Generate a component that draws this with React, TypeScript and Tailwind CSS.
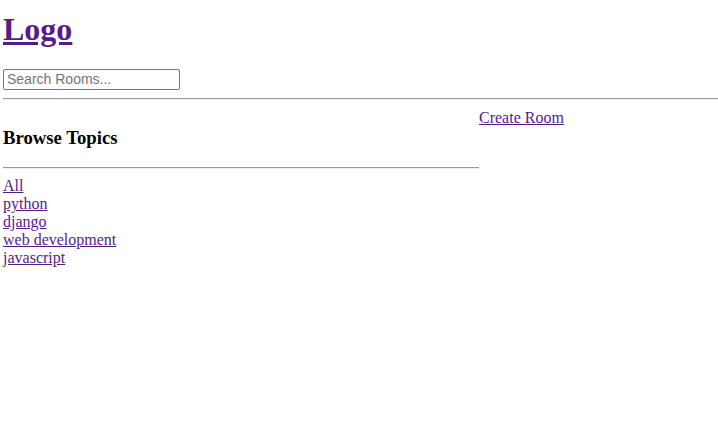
import React from "react";

const topics = ["All", "python", "django", "web development", "javascript"];

function Rule() {
  return <div className="h-[2px] border-t border-b border-t-[#9a9a9a] border-b-[#eeeeee]" />;
}

export default function App() {
  return (
    <div className="min-h-[448px] bg-white pl-[3px] text-black" style={{ fontFamily: '"Liberation Serif", "Times New Roman", serif' }}>
      {/* Header */}
      <h1 className="pt-[11px] text-[32px] font-bold leading-[37px]">
        <a href="#" className="text-[#551a8b] underline">Logo</a>
      </h1>
      <form className="mt-[19px]">
        <input
          type="text"
          placeholder="Search Rooms..."
          className="box-border h-[21px] w-[177px] rounded-[2px] border border-[#767676] px-[3px] text-[14px] leading-[15px] text-black placeholder:text-[#757575]"
          style={{ fontFamily: '"Liberation Sans", Arial, sans-serif' }}
        />
      </form>
      <div className="mt-[7px]">
        <Rule />
      </div>

      {/* Content */}
      <div className="mt-[6px] grid grid-cols-[476px_1fr]">
        <div>
          <h3 className="mt-[21px] text-[18.72px] font-bold leading-[21px]">Browse Topics</h3>
          <div className="mt-[19px]">
            <Rule />
          </div>
          <div className="mt-[8px] flex flex-col text-[16px] leading-[18px]">
            {topics.map((t) => (
              <a key={t} href="#" className="self-start text-[#551a8b] underline">
                {t}
              </a>
            ))}
          </div>
        </div>
        <div>
          <a href="#" className="text-[16px] leading-[18px] text-[#551a8b] underline">Create Room</a>
        </div>
      </div>
    </div>
  );
}
